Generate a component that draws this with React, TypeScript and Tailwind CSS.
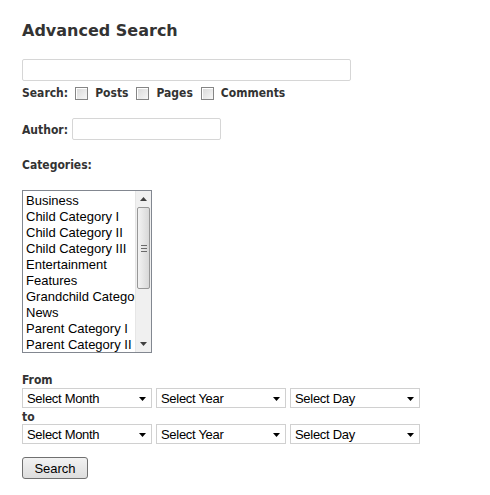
const categories = [
  "Business",
  "Child Category I",
  "Child Category II",
  "Child Category III",
  "Entertainment",
  "Features",
  "Grandchild Category",
  "News",
  "Parent Category I",
  "Parent Category II",
];

const Checkbox = () => (
  <span className="inline-block w-[13px] h-[13px] border border-[#858585] bg-gradient-to-br from-[#d8d8d8] to-[#f7f7f7] shadow-[inset_1px_1px_0_#fff]" />
);

const FakeSelect = ({ label }: { label: string }) => (
  <div className="w-[130px] h-[20px] border border-[#d0d0d0] bg-white flex items-center justify-between pt-[1px] pl-[4px] pr-[5px] font-['Liberation_Sans',Arial,sans-serif] text-[13px] text-black tracking-[-0.3px]">
    <span>{label}</span>
    <svg width="7" height="4" viewBox="0 0 7 4">
      <path d="M0 0 H7 L3.5 4 Z" fill="#000" />
    </svg>
  </div>
);

const label = "font-['DejaVu_Sans_Condensed','DejaVu_Sans',sans-serif] font-bold text-[12px]";

export default function App() {
  return (
    <div className="min-h-[495px] w-[490px] bg-white pl-[22px] pt-[21px] text-[#333] font-['DejaVu_Sans',Verdana,sans-serif]">
      <h1 className="h-[20px] leading-[20px] text-[16px] font-bold text-[#333]">Advanced Search</h1>

      <div className="mt-[18px] w-[329px] h-[22px] border border-[#d6d6d6] rounded-[2px] bg-white" />

      <div className={`h-[22px] pt-[2px] flex items-center ${label}`}>
        <span>Search:</span>
        <span className="ml-[7px] flex items-center"><Checkbox /></span>
        <span className="ml-[7px]">Posts</span>
        <span className="ml-[8px] flex items-center"><Checkbox /></span>
        <span className="ml-[7px]">Pages</span>
        <span className="ml-[8px] flex items-center"><Checkbox /></span>
        <span className="ml-[7px]">Comments</span>
      </div>

      <div className={`mt-[15px] h-[22px] flex items-center ${label}`}>
        <span className="pt-[2px]">Author:</span>
        <div className="ml-[4px] w-[149px] h-[22px] border border-[#d6d6d6] rounded-[2px] bg-white" />
      </div>

      <div className={`mt-[15px] h-[20px] leading-[20px] ${label}`}>Categories:</div>

      <div className="mt-[15px] w-[130px] h-[163px] border border-[#828790] bg-white flex overflow-hidden">
        <ul className="flex-1 min-w-0 pt-[2px] pl-[3px] font-['Liberation_Sans',Arial,sans-serif] text-[13px] leading-[16px] text-black">
          {categories.map((c) => (
            <li key={c} className="whitespace-nowrap overflow-hidden">{c}</li>
          ))}
        </ul>
        <div className="w-[16px] flex flex-col bg-[#f0f0f0] border-l border-[#e6e6e6]">
          <div className="h-[16px] flex items-center justify-center">
            <svg width="7" height="4" viewBox="0 0 7 4">
              <path d="M0 4 H7 L3.5 0 Z" fill="#404040" />
            </svg>
          </div>
          <div className="mx-[1px] h-[82px] rounded-[2px] border border-[#979797] bg-gradient-to-r from-[#f3f3f3] to-[#d8d8d8] flex flex-col items-center justify-center gap-[2px]">
            <span className="block w-[6px] h-[1px] bg-[#6a6a6a]" />
            <span className="block w-[6px] h-[1px] bg-[#6a6a6a]" />
            <span className="block w-[6px] h-[1px] bg-[#6a6a6a]" />
          </div>
          <div className="flex-1" />
          <div className="h-[16px] flex items-center justify-center">
            <svg width="7" height="4" viewBox="0 0 7 4">
              <path d="M0 0 H7 L3.5 4 Z" fill="#404040" />
            </svg>
          </div>
        </div>
      </div>

      <div className={`mt-[18px] h-[16px] pt-[1px] leading-[16px] ${label}`}>From</div>
      <div className="mt-[1px] flex gap-[4px]">
        <FakeSelect label="Select Month" />
        <FakeSelect label="Select Year" />
        <FakeSelect label="Select Day" />
      </div>
      <div className={`h-[16px] pt-[1px] leading-[16px] ${label}`}>to</div>
      <div className="flex gap-[4px]">
        <FakeSelect label="Select Month" />
        <FakeSelect label="Select Year" />
        <FakeSelect label="Select Day" />
      </div>

      <button className="mt-[13px] w-[66px] h-[22px] pt-[1px] rounded-[3px] border border-[#707070] bg-gradient-to-b from-[#f2f2f2] to-[#dddddd] font-['Liberation_Sans',Arial,sans-serif] text-[13px] text-black">
        Search
      </button>
    </div>
  );
}
